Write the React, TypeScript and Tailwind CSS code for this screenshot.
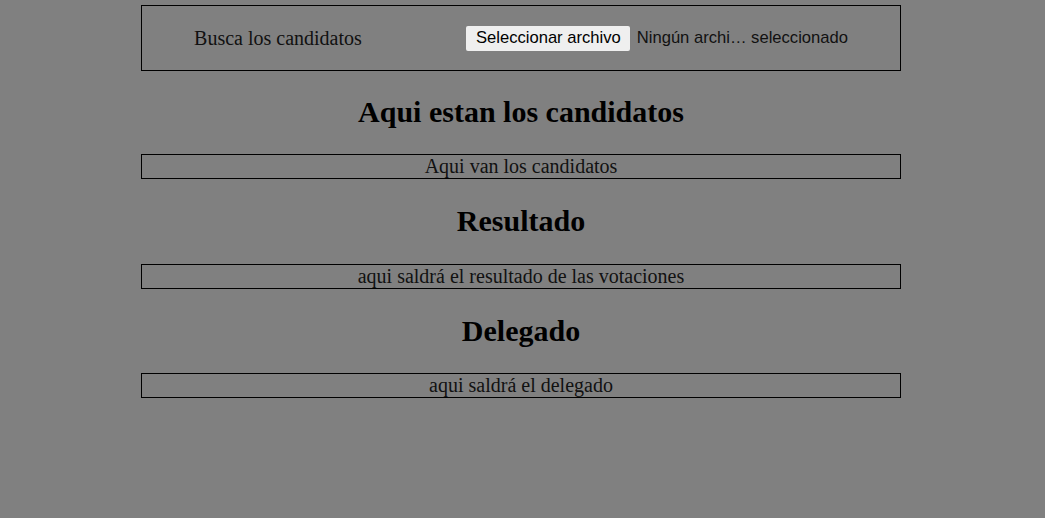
export default function App() {
  const sections = [
    { title: "Aqui estan los candidatos", body: "Aqui van los candidatos" },
    { title: "Resultado", body: "aqui saldrá el resultado de las votaciones" },
    { title: "Delegado", body: "aqui saldrá el delegado" },
  ];

  return (
    <div
      className="min-h-[518px] bg-[#808080] pt-[5px] text-black text-[20px]"
      style={{ fontFamily: '"Liberation Serif", "Times New Roman", serif' }}
    >
      <div className="ml-[141px] w-[760px]">
        {/* Upload box */}
        <div className="flex h-[66px] items-center justify-around border border-black">
          <span className="leading-[23px] text-[#111]">Busca los candidatos</span>
          <div
            className="flex w-[382px] items-center whitespace-nowrap text-[16.6px]"
            style={{ fontFamily: '"Liberation Sans", Arial, sans-serif' }}
          >
            <span className="flex h-[25px] shrink-0 items-center rounded-[2px] bg-[#efefef] pl-[10px] pr-[9px]">
              Seleccionar archivo
            </span>
            <span className="ml-[7px] text-[#111]">Ningún archi… seleccionado</span>
          </div>
        </div>

        {sections.map((s, i) => (
          <div key={s.title}>
            <h2
              className={
                i === 0
                  ? "mt-[24px] mb-[0.83em] text-center text-[30px] font-bold leading-[1.15]"
                  : "my-[0.83em] text-center text-[30px] font-bold leading-[1.15]"
              }
            >
              {s.title}
            </h2>
            <div className="border border-black text-center leading-[23px] text-[#111]">
              {s.body}
            </div>
          </div>
        ))}
      </div>
    </div>
  );
}
